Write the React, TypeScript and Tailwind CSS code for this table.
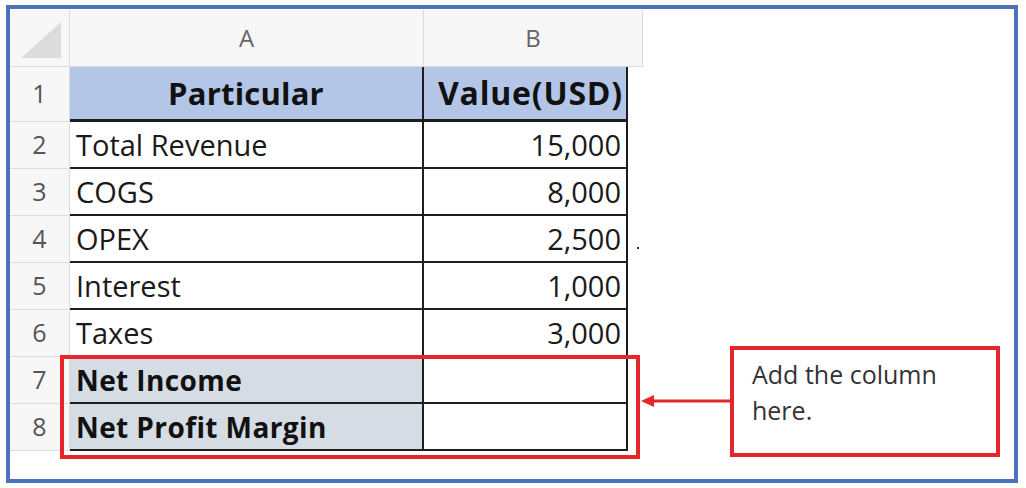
import React from 'react';

const rows: { label: string; value: string }[] = [
  { label: 'Total Revenue', value: '15,000' },
  { label: 'COGS', value: '8,000' },
  { label: 'OPEX', value: '2,500' },
  { label: 'Interest', value: '1,000' },
  { label: 'Taxes', value: '3,000' },
];

const font = { fontFamily: '"Open Sans", Lato, sans-serif' };

const RowNum: React.FC<{ n: number; tall?: boolean }> = ({ n, tall }) => (
  <div
    className={`flex items-center justify-center bg-[#f7f7f7] border-b border-r border-[#dcdcdc] text-[25px] text-[#555] ${tall ? 'h-[55px]' : 'h-[47px]'}`}
  >
    {n}
  </div>
);

export default function App() {
  return (
    <div className="w-[1026px] h-[488px] bg-white pl-[6px] pt-[5px]" style={font}>
      <div className="relative w-[1012px] h-[478px] border-4 border-[#4a72b8] pt-px">
        <div className="grid grid-cols-[60px_354px_204px_15px]">
          {/* column headers */}
          <div className="h-[57px] bg-[#f7f7f7] border-r border-b border-[#dcdcdc] flex items-end justify-end p-[6px]">
            <svg width="44" height="40" viewBox="0 0 44 40">
              <polygon points="2,38 42,38 42,2" fill="#dcdcdc" />
            </svg>
          </div>
          <div className="h-[57px] bg-[#f7f7f7] border-r border-b border-[#dcdcdc] flex items-center justify-center text-[24px] text-[#666]">
            A
          </div>
          <div className="col-span-2 h-[57px] bg-[#f7f7f7] border-r border-b border-[#dcdcdc] flex items-center justify-center text-[24px] text-[#666]">
            B
          </div>

          {/* header row 1 */}
          <RowNum n={1} tall />
          <div className="h-[55px] bg-[#b4c6e7] border-b-[3px] border-r-2 border-[#1e1e1e] flex items-center justify-center font-bold text-[31px] tracking-[0.2px] text-[#111]">
            Particular
          </div>
          <div className="h-[55px] bg-[#b4c6e7] border-b-[3px] border-r-2 border-[#1e1e1e] flex items-center justify-end pr-[3px] font-bold text-[32px] tracking-[0.8px] text-[#111]">
            Value(USD)
          </div>
          <div className="h-[55px]" />

          {rows.map((r, i) => (
            <React.Fragment key={r.label}>
              <RowNum n={i + 2} />
              <div className="h-[47px] border-b-2 border-r-2 border-[#1e1e1e] flex items-center pl-[6px] text-[29px] text-[#1a1a1a]">
                {r.label}
              </div>
              <div className="h-[47px] border-b-2 border-r-2 border-[#1e1e1e] flex items-center justify-end pr-[5px] text-[29px] text-[#1a1a1a]">
                {r.value}
              </div>
              <div className="h-[47px]" />
            </React.Fragment>
          ))}

          {['Net Income', 'Net Profit Margin'].map((label, i) => (
            <React.Fragment key={label}>
              <RowNum n={i + 7} />
              <div className="h-[47px] bg-[#d6dce4] border-b-2 border-r-2 border-[#1e1e1e] flex items-center pl-[6px] font-bold text-[28px] tracking-[0.4px] text-[#111]">
                {label}
              </div>
              <div className="h-[47px] border-b-2 border-r-2 border-[#1e1e1e]" />
              <div className="h-[47px]" />
            </React.Fragment>
          ))}
        </div>

        {/* stray dot */}
        <span className="absolute left-[627px] top-[238px] w-[2px] h-[2px] bg-[#2a2a8a]" />

        {/* red highlight around rows 7-8 */}
        <div className="absolute left-[50px] top-[346px] w-[580px] h-[104px] border-4 border-[#e5262a]" />

        {/* arrow */}
        <svg className="absolute left-[630px] top-[383px]" width="92" height="18" viewBox="0 0 92 18">
          <line x1="12" y1="9" x2="92" y2="9" stroke="#e5262a" strokeWidth="3" />
          <polygon points="1,9 14,3 14,15" fill="#e5262a" />
        </svg>

        {/* callout */}
        <div className="absolute left-[720px] top-[337px] w-[270px] h-[111px] border-4 border-[#e5262a] bg-white pl-[18px] pt-[6px] text-[25px] leading-[36px] text-[#333]">
          Add the column
          <br />
          here.
        </div>
      </div>
    </div>
  );
}
